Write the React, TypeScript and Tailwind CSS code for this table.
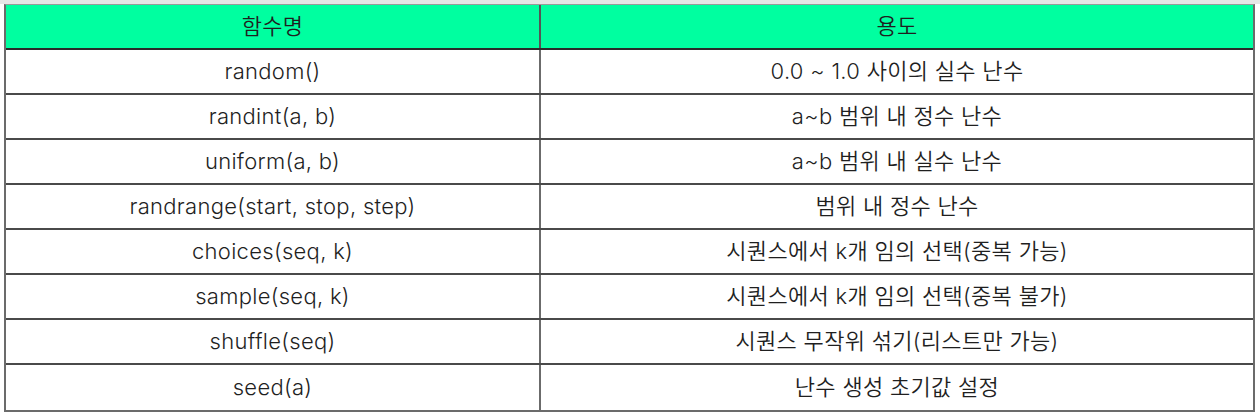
const rows: [string, string][] = [
  ["random()", "0.0 ~ 1.0 사이의 실수 난수"],
  ["randint(a, b)", "a~b 범위 내 정수 난수"],
  ["uniform(a, b)", "a~b 범위 내 실수 난수"],
  ["randrange(start, stop, step)", "범위 내 정수 난수"],
  ["choices(seq, k)", "시퀀스에서 k개 임의 선택(중복 가능)"],
  ["sample(seq, k)", "시퀀스에서 k개 임의 선택(중복 불가)"],
  ["shuffle(seq)", "시퀀스 무작위 섞기(리스트만 가능)"],
  ["seed(a)", "난수 생성 초기값 설정"],
];

export default function App() {
  return (
    <div
      className="w-[1260px] h-[416px] bg-white text-[#1f1f1f]"
      style={{ fontFamily: 'Inter, "Noto Sans CJK KR", sans-serif' }}
    >
      <div className="h-[4px] bg-[#e6e6e6]" />
      <div className="ml-[4px] w-[1251px] border-l-2 border-r-2 border-b-2 border-t border-l-[#6b6b6b] border-r-[#6b6b6b] border-b-[#6b6b6b] border-t-[#9a9a9a]">
        <div className="grid grid-cols-[535px_1fr] h-[45px] bg-[#00ffa0] border-b-2 border-[#2a2a2a] text-[22px] font-[350] tracking-[0.3px]">
          <div className="flex items-center justify-center border-r-2 border-[#555]">함수명</div>
          <div className="flex items-center justify-center">용도</div>
        </div>
        {rows.map(([fn, desc], i) => (
          <div
            key={fn}
            className={
              "grid grid-cols-[535px_1fr] h-[45px] text-[22px] font-[350] tracking-[0.3px] " +
              (i < rows.length - 1 ? "border-b-2 border-[#4a4a4a]" : "")
            }
          >
            <div className="flex items-center justify-center border-r-2 border-[#6b6b6b]">{fn}</div>
            <div className="flex items-center justify-center">{desc}</div>
          </div>
        ))}
      </div>
    </div>
  );
}
